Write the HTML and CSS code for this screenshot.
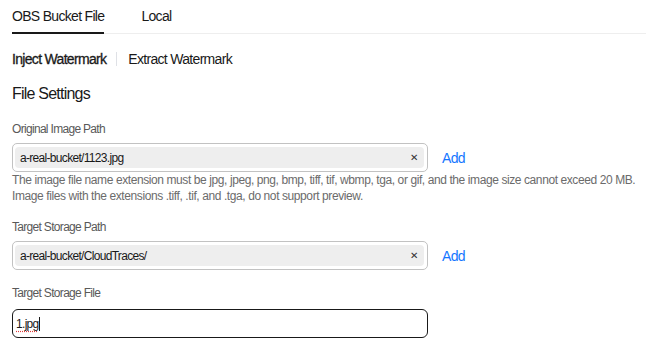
FILE: index.html
```html
<!DOCTYPE html>
<html lang="en">
<head>
    <meta charset="UTF-8">
    <title>Watermark</title>
    <link rel="stylesheet" href="styles.css">
</head>
<body>
    <nav class="tabs">
        <span class="tab active">OBS Bucket File</span>
        <span class="tab">Local</span>
        <span class="tab-rest"></span>
    </nav>

    <div class="mode">
        <span class="mode-item active">Inject Watermark</span>
        <span class="mode-sep"></span>
        <span class="mode-item">Extract Watermark</span>
    </div>

    <h2 class="section-title">File Settings</h2>

    <!-- Original image -->
    <div class="field first">
        <label class="field-label">Original Image Path</label>
        <div class="field-row">
            <div class="select-box">
                <div class="chip">
                    <span class="chip-text">a-real-bucket/1123.jpg</span>
                    <span class="chip-close">&#x2715;</span>
                </div>
            </div>
            <a class="add-link">Add</a>
        </div>
        <p class="help">The image file name extension must be jpg, jpeg, png, bmp, tiff, tif, wbmp, tga, or gif, and the image size cannot exceed 20 MB.<br>Image files with the extensions .tiff, .tif, and .tga, do not support preview.</p>
    </div>

    <!-- Target path -->
    <div class="field">
        <label class="field-label">Target Storage Path</label>
        <div class="field-row">
            <div class="select-box">
                <div class="chip">
                    <span class="chip-text">a-real-bucket/CloudTraces/</span>
                    <span class="chip-close">&#x2715;</span>
                </div>
            </div>
            <a class="add-link">Add</a>
        </div>
    </div>

    <!-- Target file -->
    <div class="field">
        <label class="field-label wide">Target Storage File</label>
        <div class="text-box"><span class="typed">1.jpg</span><span class="caret"></span></div>
    </div>
</body>
</html>
```

FILE: styles.css
```css
/* Global Styles */
body {
    margin: 0;
    padding: 0 12px;
    font-family: "Liberation Sans", Arial, sans-serif;
    letter-spacing: -0.043em;
    color: #191919;
    background: #fff;
}

/* Tabs */
.tabs {
    display: flex;
    height: 34px;
    margin-right: -12px;
}

.tab {
    font-size: 14px;
    line-height: 32px;
}

.tab.active {
    border-bottom: 2px solid #191919;
    margin-right: 37px;
}

.tab:not(.active) {
    border-bottom: 1px solid #eeeeee;
    height: 33px;
    margin-left: -37px;
    padding-left: 37px;
}

.tab-rest {
    flex: 1;
    border-bottom: 1px solid #eeeeee;
    height: 33px;
}

/* Mode switch */
.mode {
    display: flex;
    align-items: center;
    margin-top: 17px;
    height: 16px;
    font-size: 14px;
}

.mode-item.active {
    -webkit-text-stroke: 0.3px #191919;
}

.mode-sep {
    width: 1px;
    height: 14px;
    background: #dfe1e6;
    margin: 0 11px 0 10px;
}

.section-title {
    font-size: 16px;
    font-weight: normal;
    letter-spacing: -0.049em;
    margin: 17px 0 0;
    line-height: 20px;
}

/* Form fields */
.field {
    margin-top: 16px;
}

.field.first {
    margin-top: 18px;
}

.field-label {
    display: block;
    font-size: 12px;
    color: #595959;
    line-height: 14px;
    margin-bottom: 7px;
}

.field-label.wide {
    margin-bottom: 9px;
}

.field-row {
    display: flex;
    align-items: center;
}

.select-box {
    box-sizing: border-box;
    width: 416px;
    height: 29px;
    border: 1px solid #c2c2c2;
    border-radius: 5px;
    padding: 3px 3px 3px 2px;
}

.chip {
    display: flex;
    align-items: center;
    height: 21px;
    background: #eeeeee;
    border-radius: 4px;
    padding: 0 7px 0 5px;
    font-size: 12px;
}

.chip-text {
    flex: 1;
}

.chip-close {
    font-size: 10px;
    color: #333;
}

.add-link {
    margin-left: 14px;
    font-size: 14px;
    color: #1476ff;
    cursor: pointer;
}

.help {
    margin: 0;
    font-size: 12px;
    line-height: 16px;
    letter-spacing: -0.034em;
    white-space: nowrap;
    color: #6b6b6b;
}

.text-box {
    box-sizing: border-box;
    width: 416px;
    height: 29px;
    border: 1px solid #191919;
    border-radius: 6px;
    display: flex;
    align-items: center;
    padding-left: 3px;
    font-size: 12px;
}

.typed {
    text-decoration: underline dotted #e03a3a;
    text-underline-offset: 3px;
}

.caret {
    width: 1px;
    height: 14px;
    background: #191919;
}
```
